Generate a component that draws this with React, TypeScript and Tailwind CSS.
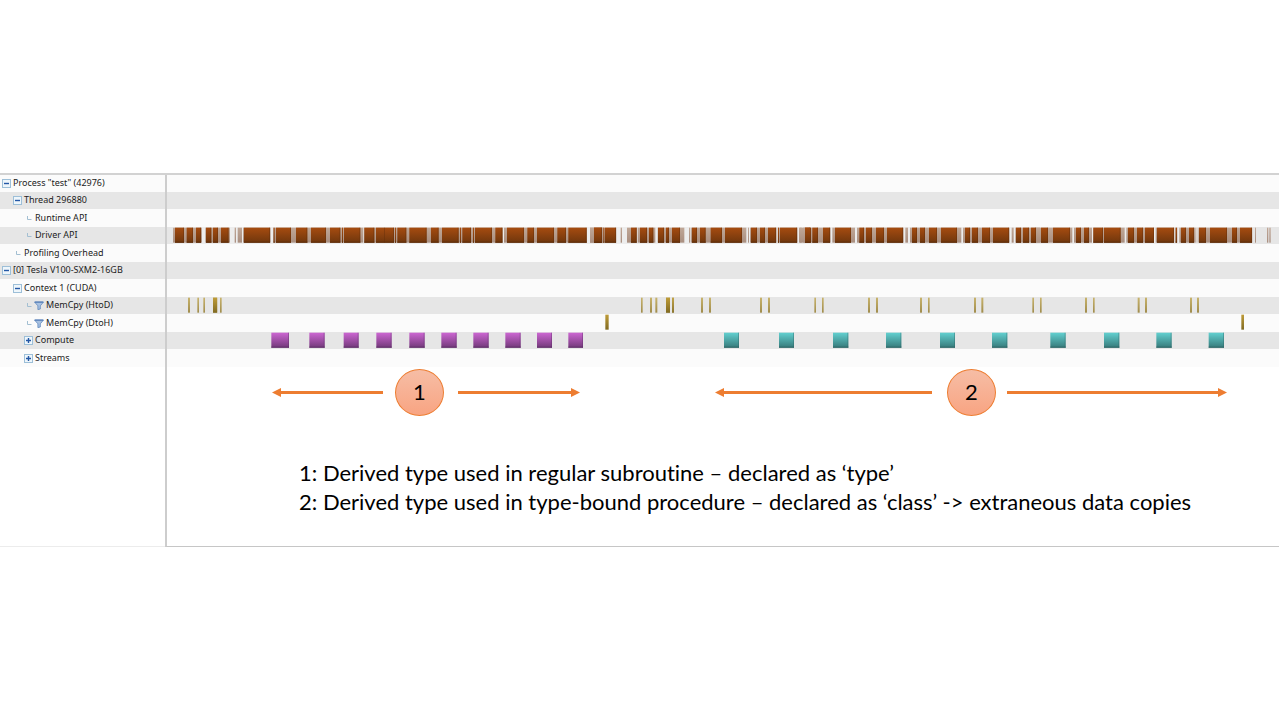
import type { ReactNode } from "react";

type Span = [number, number];
type Group = { origin: number; spans: Span[] };

const VIEW_START = 501;
const VIEW_TICKS = 3336;

const driverBusy: Group[] = [
  { origin: 495, spans: [[24, 111], [121, 195], [209, 213], [218, 231], [234, 317], [324, 595], [597, 660]] },
  { origin: 1155, spans: [[0, 354], [357, 606], [615, 657]] },
  { origin: 1770, spans: [[0, 79], [92, 96], [111, 142], [144, 196], [203, 283], [297, 301], [303, 469], [474, 477], [480, 560], [563, 623], [627, 660]] },
  { origin: 2400, spans: [[0, 5], [10, 92], [97, 165], [171, 311], [316, 324], [330, 484], [489, 629], [635, 641], [646, 720]] },
  { origin: 3105, spans: [[0, 112], [117, 171], [174, 269], [274, 357], [362, 418], [421, 427], [433, 482], [485, 487], [490, 652], [660, 663], [696, 700], [703, 707]] },
];

const driverCalls: Group[] = [
  { origin: 495, spans: [[30, 57], [65, 84], [93, 108], [123, 139], [144, 159], [168, 191], [237, 315], [326, 329], [333, 378], [393, 427], [438, 483], [495, 526], [531, 534], [537, 586], [598, 628], [633, 660]] },
  { origin: 1155, spans: [[0, 27], [30, 33], [37, 64], [73, 125], [138, 161], [171, 221], [225, 228], [232, 258], [264, 267], [270, 321], [331, 352], [366, 417], [427, 447], [456, 507], [517, 543], [550, 605], [627, 650]] },
  { origin: 1770, spans: [[12, 36], [40, 43], [45, 78], [123, 140], [150, 171], [177, 190], [204, 222], [228, 237], [246, 270], [306, 321], [330, 347], [362, 396], [405, 456], [483, 501], [510, 525], [534, 558], [564, 567], [570, 621], [645, 660]] },
  { origin: 2400, spans: [[15, 33], [37, 54], [69, 90], [105, 153], [178, 192], [198, 216], [228, 252], [261, 309], [336, 351], [360, 375], [387, 411], [423, 471], [495, 510], [516, 534], [546, 570], [579, 627], [648, 663], [669, 687], [693, 708]] },
  { origin: 3105, spans: [[18, 39], [54, 105], [123, 138], [147, 162], [175, 204], [207, 257], [279, 297], [306, 324], [330, 357], [366, 417], [422, 426], [438, 453], [462, 477], [492, 513], [525, 576], [591, 606], [615, 651]] },
];

const hostToDevice: Group[] = [
  { origin: 495, spans: [[69, 75], [97, 102], [115, 120], [144, 157], [165, 170]] },
  { origin: 1770, spans: [[153, 158], [180, 186], [196, 202], [228, 240], [246, 252], [333, 339], [357, 363], [510, 516], [534, 540]] },
  { origin: 2400, spans: [[43, 48], [66, 71], [204, 210], [228, 234], [360, 366], [384, 389], [522, 528], [544, 550], [697, 702]] },
  { origin: 3105, spans: [[15, 20], [150, 156], [174, 179], [308, 314], [330, 336], [465, 471], [486, 492]] },
];
const hostToDeviceLong: Group[] = [
  { origin: 495, spans: [[144, 156]] },
  { origin: 1770, spans: [[228, 240], [247, 251]] },
];

const deviceToHost: Group[] = [
  { origin: 1770, spans: [[46, 56]] },
  { origin: 3105, spans: [[619, 627]] },
];

const typeKernels: Group[] = [
  { origin: 495, spans: [[319, 372], [433, 479], [536, 581], [634, 680]] },
  { origin: 1155, spans: [[73, 119], [169, 215], [265, 311], [361, 407], [456, 501], [550, 594]] },
];
const classKernels: Group[] = [
  { origin: 1770, spans: [[402, 447], [567, 612]] },
  { origin: 2400, spans: [[99, 145], [258, 304], [420, 465], [576, 622]] },
  { origin: 3105, spans: [[46, 92], [207, 253], [364, 410], [521, 567]] },
];

function Bars({ groups, fill, edge, y = 2 }: { groups: Group[]; fill: string; edge?: string; y?: number }) {
  return (
    <>
      {groups.flatMap(({ origin, spans }) =>
        spans.map(([a, b]) => (
          <g key={origin + a}>
            <rect x={origin + a} y={y} width={b - a} height={45} fill={fill} />
            {edge && <rect x={origin + a} y={y + 42} width={b - a} height={3} fill={edge} />}
            {edge && b - a > 6 && <rect x={origin + b - 3} y={y} width={3} height={45} fill={edge} opacity={0.4} />}
          </g>
        ))
      )}
    </>
  );
}

function Track({ children }: { children: ReactNode }) {
  return (
    <svg
      className="block h-[17px] w-full"
      viewBox={`${VIEW_START} 0 ${VIEW_TICKS} 51`}
      preserveAspectRatio="none"
      aria-hidden="true"
    >
      {children}
    </svg>
  );
}

function Gradients() {
  const stops = [
    ["call", "#a64c10", "#6f360d"],
    ["pale", "#c0a797", "#a98f80"],
    ["copy", "#c8b36c", "#a08c4c"],
    ["copyLong", "#bf9c38", "#806a22"],
    ["violet", "#cc66d2", "#73397a"],
    ["teal", "#62d0d0", "#377a7a"],
  ];
  return (
    <svg className="absolute size-0" aria-hidden="true">
      <defs>
        {stops.map(([id, top, bottom]) => (
          <linearGradient key={id} id={id} x1="0" y1="0" x2="0" y2="1">
            <stop offset="0" stopColor={top} />
            <stop offset="1" stopColor={bottom} />
          </linearGradient>
        ))}
      </defs>
    </svg>
  );
}

function Toggle({ open, label }: { open: boolean; label: string }) {
  return (
    <button type="button" aria-expanded={open} aria-label={label} className="block size-[9px]">
      <svg viewBox="0 0 9 9" className="block size-[9px]">
        <rect x="0.5" y="0.5" width="8" height="8" fill="#eef6fb" stroke="#9dbfd8" />
        <path d={open ? "M2 4.5h5" : "M2 4.5h5M4.5 2v5"} stroke="#2458a6" strokeWidth="1.4" />
      </svg>
    </button>
  );
}

function Elbow() {
  return (
    <svg viewBox="0 0 9 9" className="block size-[9px]" aria-hidden="true">
      <path d="M3.5 2v3.5h4" fill="none" stroke="#a3bfd2" strokeWidth="1" />
    </svg>
  );
}

function Funnel() {
  return (
    <svg viewBox="0 0 10 9" className="-ml-px block h-[9px] w-[10px]" aria-hidden="true">
      <path d="M0.5 1h9L6.3 4.8V8L3.9 8.6V4.8z" fill="#a9c2e2" stroke="#5d86bd" strokeWidth="0.8" />
      <path d="M0.8 1.1h8.4" stroke="#4d78b3" strokeWidth="1" />
    </svg>
  );
}

type Row = { label: string; depth: 0 | 1 | 2; kind: "open" | "closed" | "leaf"; filter?: boolean; track?: ReactNode };

const rows: Row[] = [
  { label: 'Process "test" (42976)', depth: 0, kind: "open" },
  { label: "Thread 296880", depth: 1, kind: "open" },
  { label: "Runtime API", depth: 2, kind: "leaf" },
  {
    label: "Driver API",
    depth: 2,
    kind: "leaf",
    track: (
      <>
        <rect x="519" y="0" width="3240" height="51" fill="#ededed" />
        <Bars groups={driverBusy} fill="url(#pale)" />
        <Bars groups={driverCalls} fill="url(#call)" edge="#5e2d0b" />
      </>
    ),
  },
  { label: "Profiling Overhead", depth: 1, kind: "leaf" },
  { label: "[0] Tesla V100-SXM2-16GB", depth: 0, kind: "open" },
  { label: "Context 1 (CUDA)", depth: 1, kind: "open" },
  {
    label: "MemCpy (HtoD)",
    depth: 2,
    kind: "leaf",
    filter: true,
    track: (
      <>
        <Bars groups={hostToDevice} fill="url(#copy)" />
        <Bars groups={hostToDeviceLong} fill="url(#copyLong)" />
      </>
    ),
  },
  {
    label: "MemCpy (DtoH)",
    depth: 2,
    kind: "leaf",
    filter: true,
    track: <Bars groups={deviceToHost} fill="url(#copyLong)" />,
  },
  {
    label: "Compute",
    depth: 2,
    kind: "closed",
    track: (
      <>
        <Bars groups={typeKernels} fill="url(#violet)" edge="#60306a" />
        <Bars groups={classKernels} fill="url(#teal)" edge="#2d6666" />
      </>
    ),
  },
  { label: "Streams", depth: 2, kind: "closed" },
];

const indent = ["pl-[2px]", "pl-[13px]", "pl-[24px]"];

function stripe(i: number) {
  if (i === 0) return "h-[17px] bg-[#fbfbfb]";
  return i % 2 ? "h-[17px] bg-[#e6e6e6]" : "h-[18px] bg-[#fbfbfb]";
}

function Arrow({ direction }: { direction: "left" | "right" }) {
  const head = (
    <svg viewBox="0 0 9 9" className="block size-[9px] shrink-0" aria-hidden="true">
      <path d={direction === "left" ? "M0 4.5L9 0v9z" : "M9 4.5L0 0v9z"} fill="#ed7d31" />
    </svg>
  );
  return (
    <div className="flex items-center">
      {direction === "left" && head}
      <div className="h-[3px] grow bg-[#ed7d31]" />
      {direction === "right" && head}
    </div>
  );
}

function Marker({ children }: { children: ReactNode }) {
  return (
    <div className="flex h-[47px] items-center justify-center rounded-[50%] border border-[#ed7d31] bg-linear-to-b from-[#f6bda5] to-[#f8a482] pb-[2px] text-[22px] leading-none">
      {children}
    </div>
  );
}

export default function App() {
  return (
    <main className="flex min-h-screen flex-col justify-center bg-white font-['Lato','Liberation_Sans',sans-serif] text-black">
      <Gradients />
      <section className="mr-px grid grid-cols-[165px_1fr] border-t-2 border-[#d2d2d2]">
        <ul className="border-b border-[#ececec] font-['Noto_Sans','Liberation_Sans',sans-serif] text-[9px] leading-none text-[#222]">
          {rows.map((row, i) => (
            <li key={row.label} className={`flex items-center gap-[2px] whitespace-nowrap ${stripe(i)} ${indent[row.depth]}`}>
              {row.kind === "leaf" ? <Elbow /> : <Toggle open={row.kind === "open"} label={row.label} />}
              {row.filter && <Funnel />}
              <span className="pb-[2px]">{row.label}</span>
            </li>
          ))}
        </ul>
        <div className="border-b border-l-2 border-b-[#c6c6c6] border-l-[#cdcdcd]">
          {rows.map((row, i) => (
            <div key={row.label} className={stripe(i)}>
              {row.track && <Track>{row.track}</Track>}
            </div>
          ))}
          <div className="mt-[2px] grid grid-cols-[105fr_111fr_12fr_49fr_14fr_122fr_135fr_217fr_15fr_49fr_11fr_220fr_52fr]">
            <span />
            <Arrow direction="left" />
            <span />
            <Marker>1</Marker>
            <span />
            <Arrow direction="right" />
            <span />
            <Arrow direction="left" />
            <span />
            <Marker>2</Marker>
            <span />
            <Arrow direction="right" />
            <span />
          </div>
          <div className="pt-[42px] pb-[30px] pl-[132px] text-[22px] leading-[29px] [font-variant-ligatures:none]">
            <p>1: Derived type used in regular subroutine – declared as ‘type’</p>
            <p>2: Derived type used in type-bound procedure – declared as ‘class’ -&gt; extraneous data copies</p>
          </div>
        </div>
      </section>
    </main>
  );
}
